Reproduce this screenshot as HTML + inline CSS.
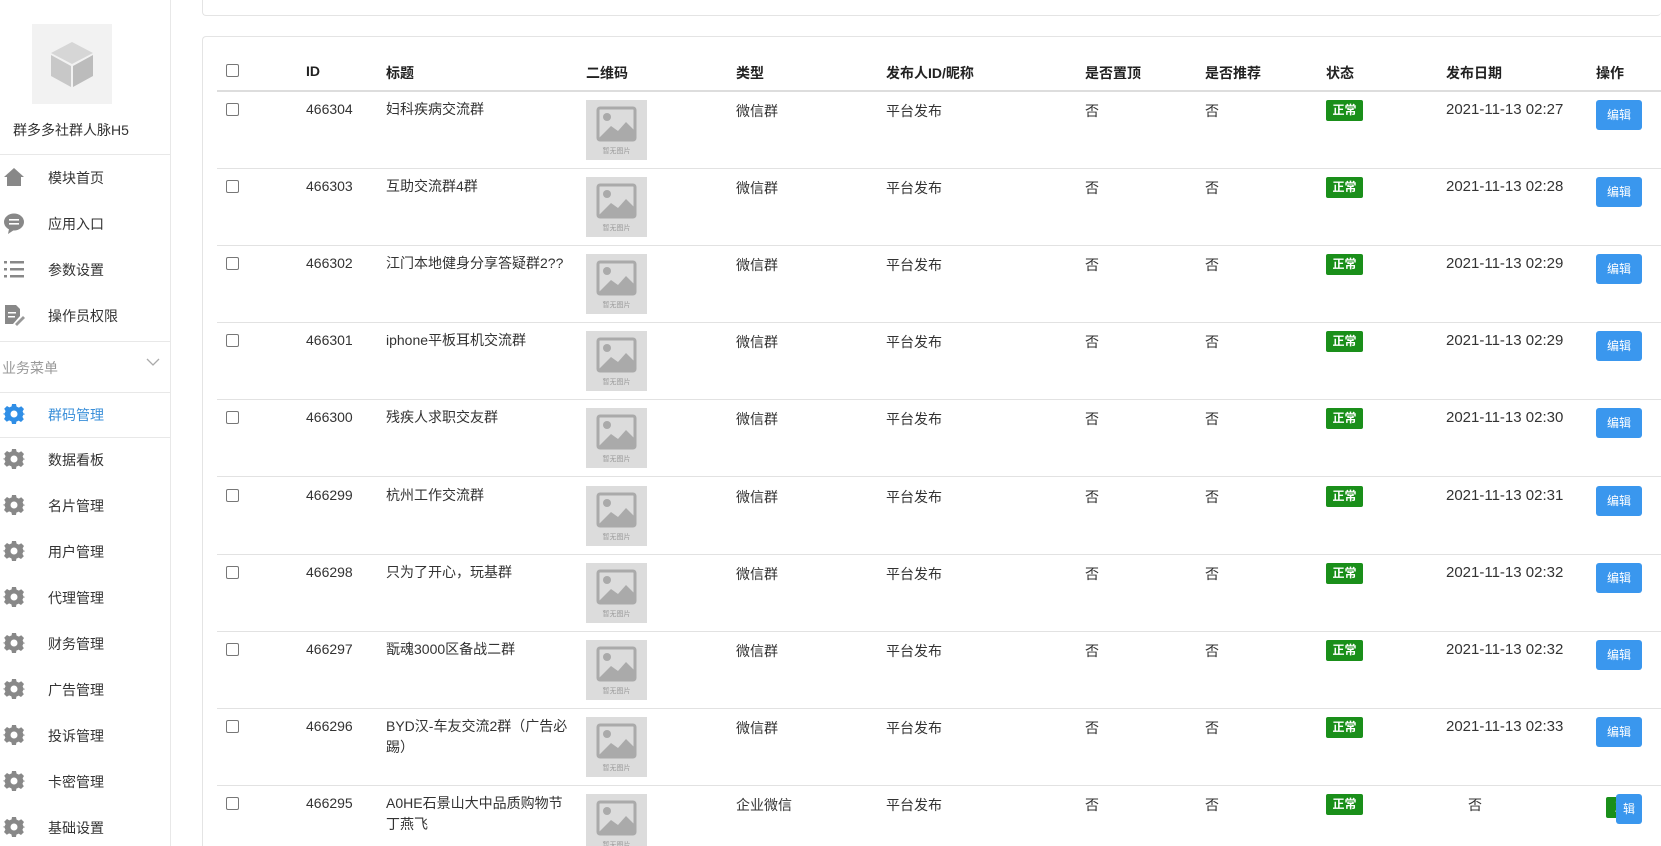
<!DOCTYPE html>
<html style="width:1661px;height:846px;overflow:hidden"><head><meta charset="utf-8"><style>
*{margin:0;padding:0;box-sizing:border-box}
body{width:1661px;height:846px;overflow:hidden;background:#fff;font-family:"Liberation Sans","Noto Sans CJK SC",sans-serif;color:#333;font-size:14px;position:relative}
.abs{position:absolute;white-space:nowrap}
.side{position:absolute;left:0;top:0;width:171px;height:846px;background:#fff;border-right:1px solid #e8e8e8}
.hr{position:absolute;left:0;width:171px;height:1px;background:#e8e8e8}
.mi{position:absolute;left:48px;font-size:14px;color:#333}
.ic{position:absolute;left:3px;width:22px;height:22px}
.card1{position:absolute;left:202px;top:-10px;width:1459px;height:26px;background:#fff;border:1px solid #e4e4e4;border-right:none;border-radius:4px}
.card2{position:absolute;left:202px;top:36px;width:1459px;height:810px;background:#fff;border:1px solid #e4e4e4;border-bottom:none;border-right:none;border-radius:4px 0 0 0}
.th{position:absolute;top:63px;font-weight:bold;font-size:14px;color:#222}
.cb{position:absolute;left:226px;width:13px;height:13px;border:1px solid #777;border-radius:2px;background:#fff}
.sep{position:absolute;left:217px;width:1444px;height:1px;background:#e2e2e2}
.td{position:absolute;font-size:14px;color:#333;white-space:nowrap}
.ph{position:absolute;left:586px;width:61px;height:60px;background:#dcdcdc}
.badge{position:absolute;left:1326px;width:37px;height:21px;background:#1a8f1a;color:#fff;font-size:12px;font-weight:bold;text-align:center;line-height:21px;border-radius:2px}
.btn{position:absolute;left:1596px;width:46px;height:30px;background:#3a97ee;color:#fff;font-size:12px;text-align:center;line-height:30px;border-radius:3px}
</style></head><body>
<div class="side">
  <div class="abs" style="left:32px;top:24px;width:80px;height:80px;background:#f2f2f2"></div>
  <svg class="abs" style="left:49px;top:40px" width="46" height="48" viewBox="0 0 46 48"><polygon points="23,2 44,13 23,24 2,13" fill="#d6d6d6"/><polygon points="2,15 22,26 22,47 2,36" fill="#c8c8c8"/><polygon points="24,26 44,15 44,36 24,47" fill="#bcbcbc"/></svg>
  <div class="abs" style="left:13px;top:120px;font-size:14px">群多多社群人脉H5</div>
  <div class="hr" style="top:154px"></div>
  <svg class="ic" style="top:166px" viewBox="0 0 22 22"><path d="M11 2 L21 11 H18 V20 H4 V11 H1 Z" fill="#888"/></svg>
  <div class="mi" style="top:168px">模块首页</div>
  <svg class="ic" style="top:212px" viewBox="0 0 22 22"><ellipse cx="11" cy="10" rx="10" ry="8.5" fill="#888"/><path d="M6 17 L5 22 L11 18Z" fill="#888"/><rect x="6" y="7" width="10" height="1.6" fill="#fff"/><rect x="6" y="11" width="10" height="1.6" fill="#fff"/></svg>
  <div class="mi" style="top:214px">应用入口</div>
  <svg class="ic" style="top:258px" viewBox="0 0 22 22"><g fill="#888"><rect x="1" y="3" width="3" height="2.5"/><rect x="7" y="3" width="14" height="2.5"/><rect x="1" y="10" width="3" height="2.5"/><rect x="7" y="10" width="14" height="2.5"/><rect x="1" y="17" width="3" height="2.5"/><rect x="7" y="17" width="14" height="2.5"/></g></svg>
  <div class="mi" style="top:260px">参数设置</div>
  <svg class="ic" style="top:304px" viewBox="0 0 22 22"><path d="M2 1 H13 L17 5 V12 L10 20 H2 Z" fill="#888"/><path d="M12 20 L20 12 L22 14 L14 22Z" fill="#999"/><rect x="5" y="8" width="8" height="1.5" fill="#fff"/><rect x="5" y="12" width="7" height="1.5" fill="#fff"/></svg>
  <div class="mi" style="top:306px">操作员权限</div>
  <div class="hr" style="top:341px"></div>
  <div class="abs" style="left:2px;top:358px;color:#999;font-size:14px">业务菜单</div>
  <svg class="abs" style="left:146px;top:358px" width="14" height="9" viewBox="0 0 14 9"><path d="M1 1 L7 7 L13 1" stroke="#aaa" stroke-width="1.3" fill="none"/></svg>
  <div class="hr" style="top:392px"></div>
  <div class="hr" style="top:437px"></div>
  <svg width="0" height="0" style="position:absolute"><defs><symbol id="g" viewBox="0 0 22 22"><path d="M9 1h4l.6 2.6 2.3 1 2.3-1.4 2.8 2.8-1.4 2.3 1 2.3L23 11v0l-2.6.6-1 2.3 1.4 2.3-2.8 2.8-2.3-1.4-2.3 1L13 21H9l-.6-2.6-2.3-1-2.3 1.4-2.8-2.8 1.4-2.3-1-2.3L-1 11l2.6-.6 1-2.3L1.2 5.8 4 3l2.3 1.4 2.3-1z" /><circle cx="11" cy="11" r="3.5" fill="#fff"/></symbol></defs></svg>
  <svg class="ic" style="top:403px;fill:#2f8ee6"><use href="#g"/></svg>
  <div class="mi" style="top:405px;color:#3a8fd9">群码管理</div>
  <svg class="ic" style="top:448px;fill:#888"><use href="#g"/></svg><div class="mi" style="top:450px">数据看板</div>
  <svg class="ic" style="top:494px;fill:#888"><use href="#g"/></svg><div class="mi" style="top:496px">名片管理</div>
  <svg class="ic" style="top:540px;fill:#888"><use href="#g"/></svg><div class="mi" style="top:542px">用户管理</div>
  <svg class="ic" style="top:586px;fill:#888"><use href="#g"/></svg><div class="mi" style="top:588px">代理管理</div>
  <svg class="ic" style="top:632px;fill:#888"><use href="#g"/></svg><div class="mi" style="top:634px">财务管理</div>
  <svg class="ic" style="top:678px;fill:#888"><use href="#g"/></svg><div class="mi" style="top:680px">广告管理</div>
  <svg class="ic" style="top:724px;fill:#888"><use href="#g"/></svg><div class="mi" style="top:726px">投诉管理</div>
  <svg class="ic" style="top:770px;fill:#888"><use href="#g"/></svg><div class="mi" style="top:772px">卡密管理</div>
  <svg class="ic" style="top:816px;fill:#888"><use href="#g"/></svg><div class="mi" style="top:818px">基础设置</div>
</div>
<div class="card1"></div>
<div class="card2"></div>
<div class="cb" style="top:64px"></div>
<div class="th" style="left:306px">ID</div>
<div class="th" style="left:386px">标题</div>
<div class="th" style="left:586px">二维码</div>
<div class="th" style="left:736px">类型</div>
<div class="th" style="left:886px">发布人ID/昵称</div>
<div class="th" style="left:1085px">是否置顶</div>
<div class="th" style="left:1205px">是否推荐</div>
<div class="th" style="left:1326px">状态</div>
<div class="th" style="left:1446px">发布日期</div>
<div class="th" style="left:1596px">操作</div>
<div class="sep" style="top:90px;height:2px;background:#ddd"></div>
<div id="rows"></div>
<script>
var d=[["466304","妇科疾病交流群","微信群","2021-11-13 02:27"],["466303","互助交流群4群","微信群","2021-11-13 02:28"],["466302","江门本地健身分享答疑群2??","微信群","2021-11-13 02:29"],["466301","iphone平板耳机交流群","微信群","2021-11-13 02:29"],["466300","残疾人求职交友群","微信群","2021-11-13 02:30"],["466299","杭州工作交流群","微信群","2021-11-13 02:31"],["466298","只为了开心，玩基群","微信群","2021-11-13 02:32"],["466297","翫魂3000区备战二群","微信群","2021-11-13 02:32"],["466296","BYD汉-车友交流2群（广告必<br>踢）","微信群","2021-11-13 02:33"],["466295","A0HE石景山大中品质购物节<br>丁燕飞","企业微信",""]];
var h="";
for(var i=0;i<d.length;i++){var y=92+i*77.1,t=Math.round(y+9);
h+='<div class="cb" style="top:'+(t+2)+'px"></div>';
h+='<div class="td" style="left:306px;top:'+t+'px">'+d[i][0]+'</div>';
h+='<div class="td" style="left:386px;top:'+t+'px;line-height:21px;margin-top:-2px">'+d[i][1]+'</div>';
h+='<div class="ph" style="top:'+(t-1)+'px"><svg width="61" height="60" viewBox="0 0 61 60"><rect x="12" y="8" width="37" height="32" rx="2" fill="none" stroke="#aaa" stroke-width="3"/><circle cx="21" cy="17" r="4" fill="#aaa"/><path d="M13 38 L25 26 L32 31 L40 22 L48 30 V39 H13Z" fill="#aaa"/><text x="30.5" y="53" font-size="7" fill="#999" text-anchor="middle" font-family="Noto Sans CJK SC">暂无图片</text></svg></div>';
h+='<div class="td" style="left:736px;top:'+t+'px">'+d[i][2]+'</div>';
h+='<div class="td" style="left:886px;top:'+t+'px">平台发布</div>';
h+='<div class="td" style="left:1085px;top:'+t+'px">否</div>';
h+='<div class="td" style="left:1205px;top:'+t+'px">否</div>';
h+='<div class="badge" style="top:'+(t-1)+'px">正常</div>';
if(d[i][3]){h+='<div class="td" style="left:1446px;top:'+t+'px;font-size:15px">'+d[i][3]+'</div>';
h+='<div class="btn" style="top:'+(t-1)+'px">编辑</div>';}
else{h+='<div class="td" style="left:1468px;top:'+t+'px">否</div><div class="badge" style="left:1606px;top:'+(t+2)+'px;width:30px">正</div><div class="btn" style="left:1616px;top:'+(t-1)+'px;width:26px">辑</div>';}
if(i<d.length-1)h+='<div class="sep" style="top:'+Math.round(y+76)+'px"></div>';}
document.getElementById("rows").innerHTML=h;
</script>
</body></html>
